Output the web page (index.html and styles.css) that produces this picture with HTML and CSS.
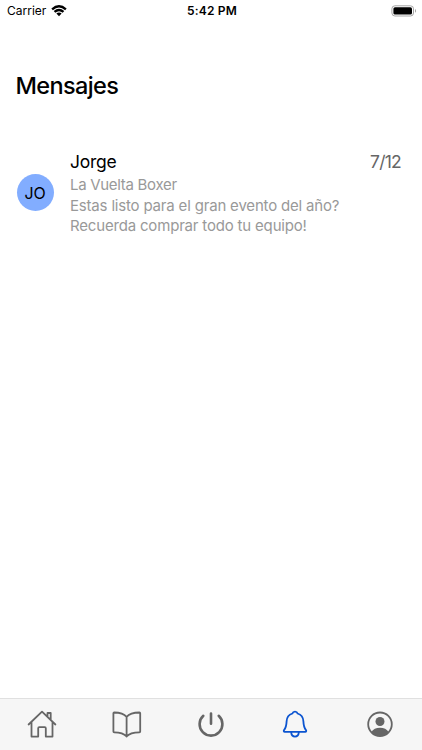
FILE: index.html
```html
<!DOCTYPE html>
<html lang="es">
<head>
<meta charset="utf-8">
<meta name="viewport" content="width=device-width, initial-scale=1">
<title>Mensajes</title>
<link rel="stylesheet" href="styles.css">
</head>
<body>
<header class="status">
  <div class="carrier"><span class="carrier-name">Carrier</span>
    <svg class="wifi" width="16" height="12" viewBox="0 0 16 12" fill="none" stroke="#000" stroke-width="2.3"><path d="M1.1 4.3Q8-1.8 14.9 4.3M3.5 6.9Q8 3 12.5 6.9"/><path d="M5.4 8.6Q8 6.5 10.6 8.6L8 11.3Z" fill="#000" stroke="none"/></svg>
  </div>
  <div class="time">5:42 PM</div>
  <svg class="battery" width="26" height="12" viewBox="0 0 26 12"><rect x=".9" y=".8" width="21.6" height="10.2" rx="3" fill="#fff" stroke="#a5a5a5"/><rect x="2.4" y="2.2" width="18.6" height="7.4" rx="1.6"/><path d="M24 4.1q1.1.5 1.1 1.8T24 7.7z" fill="#a5a5a5"/></svg>
</header>
<main class="content">
  <h1 class="title">Mensajes</h1>
  <article class="message">
    <div class="avatar"><span class="initials">JO</span></div>
    <div class="body">
      <div class="heading"><span class="name">Jorge</span><time class="date">7/12</time></div>
      <div class="subject">La Vuelta Boxer</div>
      <div class="text"><span class="line">Estas listo para el gran evento del año?</span><span class="line">Recuerda comprar todo tu equipo!</span></div>
    </div>
  </article>
</main>
<nav class="tabs">
  <a class="tab"><svg class="icon" viewBox="0 0 32 32"><path d="M2.6 16.5 16 3.7l13.4 12.8M5.5 14v14.6h6.7v-8.4q0-1.1 1.1-1.1h5.4q1.1 0 1.1 1.1v8.4h6.7V14M21.5 8.5V5h3.2v6.6"/></svg></a>
  <a class="tab"><svg class="icon" viewBox="0 0 32 32"><path d="M15.6 8.8Q12 4.7 3.2 4.5q-.8 0-.8.8v18.3q0 .8.8.8 8.8 0 12.4 4.1 3.6-4.1 12.8-4.1.8 0 .8-.8V5.3q0-.8-.8-.8-9.2.2-12.8 4.3zM15.6 8.8v19.7"/></svg></a>
  <a class="tab"><svg class="icon power" viewBox="0 0 32 32"><path d="M16 5.5v10.3M8.3 7.8a11.4 11.4 0 1 0 15.4 0"/></svg></a>
  <a class="tab active"><svg class="icon" viewBox="0 0 32 32"><path d="M13.4 5.5C13.8 4.2 14.8 3.6 16 3.6s2.2.6 2.6 1.9c3.8 1.1 5.6 3.8 5.8 7.9.2 4.4.6 6.2 2.4 8.5.8 1 .5 2-.6 2H5.8c-1.1 0-1.4-1-.6-2 1.8-2.3 2.2-4.1 2.4-8.5.2-4.1 2-6.8 5.8-7.9zM12.1 24.2c.3 2.9 1.9 4.4 3.9 4.4s3.6-1.5 3.9-4.4"/></svg></a>
  <a class="tab"><svg class="icon" viewBox="0 0 32 32"><circle cx="16" cy="16.3" r="11.8"/><g class="solid"><circle cx="16" cy="13.5" r="4.5"/><path d="M7.2 24.2c1.9-2.9 4.9-4.4 8.8-4.4s6.9 1.5 8.8 4.4a12 12 0 0 1-17.6 0z"/></g></svg></a>
</nav>
</body>
</html>
```
FILE: styles.css
```css
* { box-sizing: border-box; }
body {
  margin: 0;
  height: 750px;
  display: flex;
  flex-direction: column;
  overflow: hidden;
  background: #fff;
  color: #000;
  font-family: Inter, "Liberation Sans", sans-serif;
}
svg { display: block; }
.status {
  height: 22px;
  padding: 0 5px 0 7px;
  display: grid;
  grid-template-columns: 1fr auto 1fr;
  align-items: center;
  font-size: 12px;
  line-height: 22px;
}
.carrier { display: flex; align-items: center; gap: 5px; }
.carrier-name { letter-spacing: 0; }
.time { font-weight: 600; letter-spacing: .2px; }
.battery { justify-self: end; }
.content { flex: 1; padding: 48px 21px 0 15.5px; }
.title {
  margin: 0;
  font-size: 23.5px;
  line-height: 32px;
  font-weight: 500;
  letter-spacing: -.63px;
}
.message { display: flex; margin-top: 48px; }
.avatar {
  width: 37px;
  height: 37px;
  margin: 24px 16.5px 0 1px;
  border-radius: 50%;
  background: #82adff;
  display: flex;
  align-items: center;
  justify-content: center;
  font-size: 16px;
  letter-spacing: -.3px;
}
.body { flex: 1; }
.heading {
  display: flex;
  justify-content: space-between;
  font-size: 17.5px;
  line-height: 23px;
}
.name { letter-spacing: -.25px; }
.date { color: #666; letter-spacing: -.75px; }
.subject, .text { color: #999; font-size: 15px; }
.subject { padding-top: 1px; line-height: 22px; letter-spacing: -.3px; }
.text { line-height: 19.5px; letter-spacing: -.18px; }
.line { display: block; width: max-content; }
.tabs {
  height: 52px;
  padding-bottom: 2px;
  display: grid;
  grid-template-columns: repeat(5, 1fr);
  align-items: center;
  justify-items: center;
  border-top: 1px solid #e0e0e0;
  background: #f6f6f6;
}
.tab { color: #666; }
.active { color: #0b54d0; }
.icon {
  width: 32px;
  height: 32px;
  fill: none;
  stroke: currentColor;
  stroke-width: 1.8;
  stroke-linecap: round;
  stroke-linejoin: round;
}
.power { stroke-width: 2.6; }
.solid { fill: currentColor; stroke: none; }
```
